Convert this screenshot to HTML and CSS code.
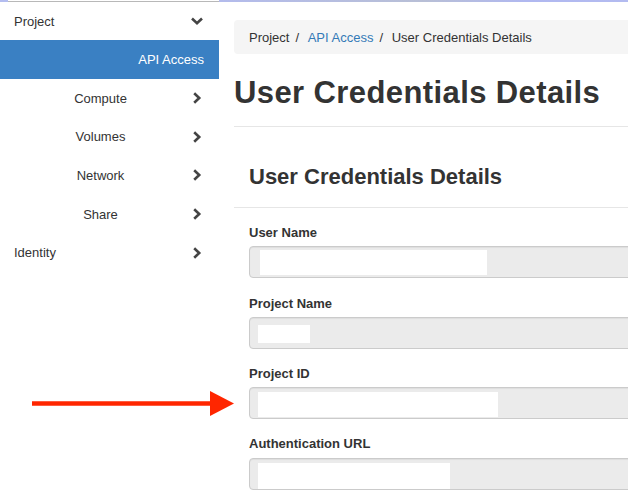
FILE: index.html
```html
<!DOCTYPE html>
<html lang="en">
<head>
<meta charset="utf-8">
<title>User Credentials Details</title>
<link rel="stylesheet" href="styles.css">
</head>
<body>
<div class="page">
  <div class="topstrip"><span class="ts-a"></span><span class="ts-b"></span><span class="ts-c"></span></div>
  <div class="layout">
    <nav class="sidebar">
      <div class="nav-row top"><span class="nav-label">Project</span><span class="chev"><svg width="14" height="8" viewBox="0 0 14 8"><path d="M2 1.5 L7 6.2 L12 1.5" fill="none" stroke="#444" stroke-width="2.6"/></svg></span></div>
      <div class="nav-row active"><span class="nav-label">API Access</span></div>
      <div class="nav-row sub"><span class="nav-label">Compute</span><span class="chev"><svg width="14" height="12" viewBox="0 0 14 12"><path d="M4.2 1.3 L9.2 6 L4.2 10.7" fill="none" stroke="#444" stroke-width="2.6"/></svg></span></div>
      <div class="nav-row sub"><span class="nav-label">Volumes</span><span class="chev"><svg width="14" height="12" viewBox="0 0 14 12"><path d="M4.2 1.3 L9.2 6 L4.2 10.7" fill="none" stroke="#444" stroke-width="2.6"/></svg></span></div>
      <div class="nav-row sub"><span class="nav-label">Network</span><span class="chev"><svg width="14" height="12" viewBox="0 0 14 12"><path d="M4.2 1.3 L9.2 6 L4.2 10.7" fill="none" stroke="#444" stroke-width="2.6"/></svg></span></div>
      <div class="nav-row sub"><span class="nav-label">Share</span><span class="chev"><svg width="14" height="12" viewBox="0 0 14 12"><path d="M4.2 1.3 L9.2 6 L4.2 10.7" fill="none" stroke="#444" stroke-width="2.6"/></svg></span></div>
      <div class="nav-row top"><span class="nav-label">Identity</span><span class="chev"><svg width="14" height="12" viewBox="0 0 14 12"><path d="M4.2 1.3 L9.2 6 L4.2 10.7" fill="none" stroke="#444" stroke-width="2.6"/></svg></span></div>
    </nav>
    <main class="content">
      <ol class="breadcrumb">
        <li>Project</li>
        <li><a href="#">API Access</a></li>
        <li>User Credentials Details</li>
      </ol>
      <div class="page-header"><h1>User Credentials Details</h1></div>
      <section class="detail">
        <h3 class="detail-title">User Credentials Details</h3>
        <div class="form">
          <div class="group"><label>User Name</label><div class="field"><span class="redact r-user"></span></div></div>
          <div class="group"><label>Project Name</label><div class="field"><span class="redact r-proj"></span></div></div>
          <div class="group"><label>Project ID</label><div class="field"><span class="redact r-id"></span></div></div>
          <div class="group"><label>Authentication URL</label><div class="field"><span class="redact r-url"></span></div></div>
        </div>
      </section>
    </main>
  </div>
  <svg class="arrow" width="206" height="30" viewBox="0 0 206 30">
    <line x1="2" y1="14.5" x2="182" y2="14.5" stroke="#ff2600" stroke-width="4.5"/>
    <polygon points="180,2 204,14.5 180,27" fill="#ff2600"/>
  </svg>
</div>
</body>
</html>
```

FILE: styles.css
```css
html, body {
  margin: 0;
  padding: 0;
  background: #fff;
}
body {
  font-family: "Liberation Sans", Arial, sans-serif;
  font-size: 13px;
  color: #333;
}
.page {
  position: relative;
  width: 628px;
  height: 504px;
  overflow: hidden;
}
.topstrip {
  display: flex;
  height: 2px;
}
.ts-a {
  width: 8px;
  background: #b4bdf0;
}
.ts-b {
  width: 211px;
  background: #fff;
  border-bottom: 1px solid #b8b8b8;
  box-sizing: border-box;
}
.ts-c {
  flex: 1;
  background: linear-gradient(to right, #b3bbec 0%, #b8bfd6 50%, #b0b8f0 75%, #b3bbf0 100%);
}
.layout {
  display: flex;
}
.sidebar {
  width: 219px;
  flex: 0 0 219px;
}
.nav-row {
  height: 38.6px;
  display: flex;
  align-items: center;
  padding-right: 15px;
}
.nav-row:first-child {
  height: 38.4px;
}
.nav-label {
  flex: 1;
}
.nav-row.top .nav-label {
  padding-left: 14px;
}
.nav-row.sub .nav-label {
  text-align: center;
  padding-left: 11px;
}
.nav-row.active {
  background: #3a80c3;
  color: #fff;
}
.nav-row.active .nav-label {
  text-align: right;
}
.chev {
  width: 14px;
  display: flex;
  justify-content: center;
  align-items: center;
}
.chev svg {
  display: block;
}
.content {
  flex: 0 0 440px;
  margin-left: 15px;
}
.breadcrumb {
  list-style: none;
  margin: 18px 0 0;
  padding: 0 15px;
  height: 34px;
  display: flex;
  align-items: center;
  background: #f5f5f5;
  border-radius: 4px;
  white-space: nowrap;
}
.breadcrumb li + li::before {
  content: "/\00a0";
  padding: 0 5px 0 6px;
  color: #333;
}
.breadcrumb a {
  color: #337ab7;
  text-decoration: none;
}
.page-header {
  border-bottom: 1px solid #e6e6e6;
  padding-bottom: 16px;
}
.page-header h1 {
  margin: 21.7px 0 0;
  font-size: 31px;
  line-height: 34px;
  font-weight: bold;
  letter-spacing: 0.4px;
  white-space: nowrap;
}
.detail-title {
  margin: 0;
  padding: 38px 15px 18px;
  font-size: 22px;
  line-height: 24.2px;
  font-weight: bold;
  border-bottom: 1px solid #e6e6e6;
  white-space: nowrap;
}
.form {
  padding: 16.3px 0 0 15px;
}
.group {
  margin-bottom: 16.1px;
}
.group label {
  display: block;
  font-weight: bold;
  line-height: 18px;
  margin-bottom: 4.3px;
}
.field {
  height: 32px;
  box-sizing: border-box;
  border: 1px solid #cbcbcb;
  border-radius: 4px;
  background: #ebebeb;
  box-shadow: inset 0 1px 1px rgba(0, 0, 0, 0.06);
  display: flex;
  align-items: flex-start;
}
.redact {
  display: block;
  background: #fff;
}
.r-user {
  margin: 3px 0 0 10px;
  width: 227px;
  height: 24.5px;
}
.r-proj {
  margin: 7px 0 0 8px;
  width: 52px;
  height: 18px;
}
.r-id {
  margin: 4px 0 0 8px;
  width: 240px;
  height: 25px;
}
.r-url {
  margin: 4px 0 0 8px;
  width: 192px;
  height: 26px;
}
.arrow {
  position: absolute;
  left: 30px;
  top: 389px;
}
```
